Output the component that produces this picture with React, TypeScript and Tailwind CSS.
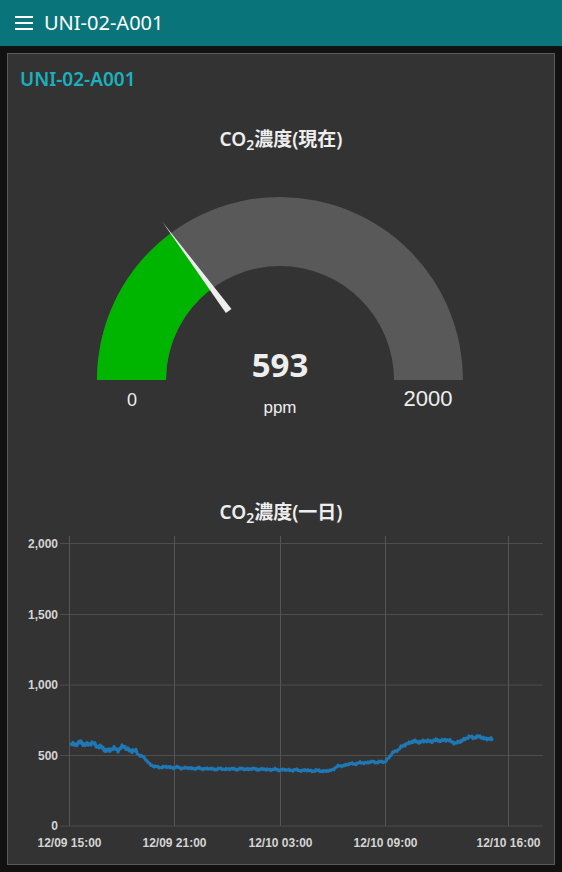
import React from "react";

const CX = 280;
const CY = 380;
const RO = 183;
const RI = 114;

// polar point, angle measured from the left end of the gauge (0..180)
function pt(r: number, deg: number) {
  const a = (Math.PI * deg) / 180;
  return [CX - r * Math.cos(a), CY - r * Math.sin(a)];
}

function arcPath(from: number, to: number) {
  const [x1, y1] = pt(RO, from);
  const [x2, y2] = pt(RO, to);
  const [x3, y3] = pt(RI, to);
  const [x4, y4] = pt(RI, from);
  return `M${x1},${y1} A${RO},${RO} 0 0 1 ${x2},${y2} L${x3},${y3} A${RI},${RI} 0 0 0 ${x4},${y4} Z`;
}

const anchors: [number, number][] = [
  [70, 745], [78, 743], [86, 744], [95, 744], [100, 747], [105, 750],
  [118, 749], [124, 747], [130, 750], [136, 752], [143, 757], [150, 764],
  [155, 767], [165, 767], [185, 768], [215, 769], [250, 769], [290, 770],
  [325, 771], [330, 771], [336, 767], [350, 764], [372, 762], [385, 762],
  [388, 758], [393, 753], [400, 748], [410, 742], [430, 741], [445, 740],
  [452, 741], [456, 744], [462, 740], [470, 737], [480, 737], [493, 740],
];

function baseY(x: number) {
  for (let i = 0; i < anchors.length - 1; i++) {
    const [xa, ya] = anchors[i];
    const [xb, yb] = anchors[i + 1];
    if (x >= xa && x <= xb) return ya + ((yb - ya) * (x - xa)) / (xb - xa);
  }
  return anchors[anchors.length - 1][1];
}

function linePoints() {
  const pts: string[] = [];
  for (let x = 70; x <= 493; x += 1) {
    const amp = x < 140 ? 3 : x > 400 ? 2 : 1.4;
    const n =
      amp *
      (Math.sin(x * 2.3) * 0.5 + Math.sin(x * 5.7 + 1.3) * 0.3 + Math.sin(x * 0.9 + 2) * 0.3);
    pts.push(`${x},${(baseY(x) + n).toFixed(1)}`);
  }
  return pts.join(" ");
}

const yTicks = [
  { label: "2,000", y: 543.5 },
  { label: "1,500", y: 614.5 },
  { label: "1,000", y: 685 },
  { label: "500", y: 755.5 },
  { label: "0", y: 826 },
];

const xTicks = [
  { label: "12/09 15:00", x: 69.5 },
  { label: "12/09 21:00", x: 174.5 },
  { label: "12/10 03:00", x: 280.5 },
  { label: "12/10 09:00", x: 385.5 },
  { label: "12/10 16:00", x: 508.5 },
];

function Title({ sub }: { sub: string }) {
  return (
    <div className="h-6 text-center text-[19px] font-semibold leading-6 text-[#eeeeee] [font-family:'Noto_Sans','Noto_Sans_CJK_JP',sans-serif]">
      CO<sub className="text-[14px]">2</sub>濃度({sub})
    </div>
  );
}

function Gauge() {
  const value = 593;
  const deg = (value / 2000) * 180;
  const [tx, ty] = pt(197, deg);
  const [bx, by] = pt(86, deg);
  const a = (Math.PI * deg) / 180;
  const px = 3.5 * Math.sin(a);
  const py = -3.5 * Math.cos(a);
  return (
    <div className="mt-[36px]">
      <Title sub="現在" />
      <svg width="546" height="280" className="block">
        <g transform="translate(-8,-151)">
          <path d={arcPath(0, 180)} fill="#595959" />
          <path d={arcPath(0, deg)} fill="#00b500" />
          <polygon
            points={`${tx},${ty} ${bx + px},${by + py} ${bx - px},${by - py}`}
            fill="#eeeeee"
          />
          <text
            x={CX}
            y={377}
            textAnchor="middle"
            fill="#eeeeee"
            fontSize="33"
            fontWeight="700"
            fontFamily="'Noto Sans', sans-serif"
          >
            {value}
          </text>
          <text
            x={CX}
            y={413}
            textAnchor="middle"
            fill="#eeeeee"
            fontSize="17"
            fontFamily="'Liberation Sans', Arial, sans-serif"
          >
            ppm
          </text>
          <text
            x={132}
            y={406}
            textAnchor="middle"
            fill="#eeeeee"
            fontSize="18"
            fontFamily="'Liberation Sans', Arial, sans-serif"
          >
            0
          </text>
          <text
            x={428}
            y={406}
            textAnchor="middle"
            fill="#eeeeee"
            fontSize="22"
            fontFamily="'Liberation Sans', Arial, sans-serif"
          >
            2000
          </text>
        </g>
      </svg>
    </div>
  );
}

function Chart() {
  return (
    <div className="mt-[69px]">
      <Title sub="一日" />
      <svg width="546" height="334" className="block">
        <g transform="translate(-8,-524)">
          {yTicks.map((t) => (
            <line key={t.label} x1={60} x2={543} y1={t.y} y2={t.y} stroke="#4d4d4d" strokeWidth="1" />
          ))}
          {xTicks.map((t) => (
            <line key={t.label} x1={t.x} x2={t.x} y1={536} y2={826} stroke="#555555" strokeWidth="1" />
          ))}
          <polyline
            points={linePoints()}
            fill="none"
            stroke="#1f77b4"
            strokeWidth="3"
            strokeLinejoin="round"
          />
          {yTicks.map((t) => (
            <text
              key={t.label}
              x={58}
              y={t.y + 4.3}
              textAnchor="end"
              fill="#d4d4d4"
              fontSize="12"
              fontWeight="700"
              fontFamily="'Liberation Sans', Arial, sans-serif"
            >
              {t.label}
            </text>
          ))}
          {xTicks.map((t) => (
            <text
              key={t.label}
              x={t.x}
              y={847}
              textAnchor="middle"
              fill="#d4d4d4"
              fontSize="12"
              fontWeight="700"
              fontFamily="'Liberation Sans', Arial, sans-serif"
            >
              {t.label}
            </text>
          ))}
        </g>
      </svg>
    </div>
  );
}

export default function App() {
  return (
    <div className="min-h-[872px] bg-[#111111] [font-family:'Noto_Sans',sans-serif]">
      {/* Top bar */}
      <header className="flex h-[46px] items-center bg-[#097479] pl-[15px] text-white">
        <svg width="18" height="14" viewBox="0 0 18 14" className="mr-[11px]">
          <rect x="0" y="0" width="18" height="2" fill="#ffffff" />
          <rect x="0" y="6" width="18" height="2" fill="#ffffff" />
          <rect x="0" y="12" width="18" height="2" fill="#ffffff" />
        </svg>
        <span className="text-[20px] leading-none">UNI-02-A001</span>
      </header>

      {/* Card */}
      <main className="p-[7px]">
        <section className="h-[812px] border border-[#5a5a5a] bg-[#333333]">
          <div className="px-[12px] pt-[13px] text-[19px] font-semibold leading-6 text-[#1ab0bd]">
            UNI-02-A001
          </div>
          <Gauge />
          <Chart />
        </section>
      </main>
    </div>
  );
}
